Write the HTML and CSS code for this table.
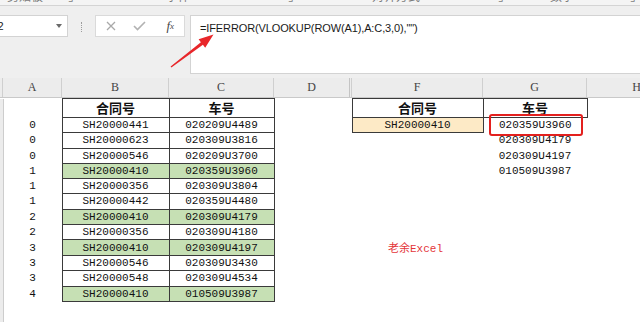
FILE: index.html
```html
<!DOCTYPE html>
<html>
<head>
<meta charset="utf-8">
<link rel="stylesheet" href="styles.css">
</head>
<body>
<div class="app">
  <div class="ribbon-edge">
    <span class="lb l1">剪贴板</span>
    <span class="lb l2">⌟</span>
    <span class="lb l3">字体</span>
    <span class="lb l4">⌟</span>
    <span class="lb l5">对齐方式</span>
    <span class="lb l6">⌟</span>
    <span class="lb l7">数字</span>
    <span class="lb l8">⌟</span>
  </div>
  <div class="toolbar">
    <div class="namebox"><span class="nb-text">G2</span><span class="dd"></span></div>
    <div class="grip"></div>
    <div class="fnbox">
      <span class="fnbtn"><svg width="10" height="10" viewBox="0 0 10 10"><path d="M1 1L9 9M9 1L1 9" stroke="#a9a9a9" stroke-width="1.3" fill="none"/></svg></span>
      <span class="fnbtn"><svg width="13" height="10" viewBox="0 0 13 10"><path d="M1 5L4.5 8.5L12 1" stroke="#b2b2b2" stroke-width="1.6" fill="none"/></svg></span>
      <span class="fnbtn fx">f<sub>x</sub></span>
    </div>
    <div class="formula">=IFERROR(VLOOKUP(ROW(A1),A:C,3,0),"")</div>
  </div>
  <div class="colheads">
    <div class="ch c-rh"></div>
    <div class="ch c-a">A</div>
    <div class="ch c-b">B</div>
    <div class="ch c-c">C</div>
    <div class="ch c-d">D</div>
    <div class="ch c-e"></div>
    <div class="ch c-f">F</div>
    <div class="ch c-g">G</div>
    <div class="ch c-h">H</div>
  </div>
  <table class="sheet">
    <colgroup>
      <col class="c-rh"><col class="c-a"><col class="c-b"><col class="c-c"><col class="c-d"><col class="c-e"><col class="c-f"><col class="c-g"><col class="c-h">
    </colgroup>
    <tr class="r1"><td class="rh"></td><td></td><td class="b hd">合同号</td><td class="b hd">车号</td><td></td><td></td><td class="b hd">合同号</td><td class="b hd">车号</td><td></td></tr>
    <tr><td class="rh"></td><td>0</td><td class="b">SH20000441</td><td class="b">020209U4489</td><td></td><td></td><td class="b y">SH20000410</td><td class="pin">020359U3960<div class="hl"></div></td><td></td></tr>
    <tr><td class="rh"></td><td>0</td><td class="b">SH20000623</td><td class="b">020309U3816</td><td></td><td></td><td></td><td>020309U4179</td><td></td></tr>
    <tr><td class="rh"></td><td>0</td><td class="b">SH20000546</td><td class="b">020209U3700</td><td></td><td></td><td></td><td>020309U4197</td><td></td></tr>
    <tr><td class="rh"></td><td>1</td><td class="b g">SH20000410</td><td class="b g">020359U3960</td><td></td><td></td><td></td><td>010509U3987</td><td></td></tr>
    <tr><td class="rh"></td><td>1</td><td class="b">SH20000356</td><td class="b">020309U3804</td><td></td><td></td><td></td><td></td><td></td></tr>
    <tr><td class="rh"></td><td>1</td><td class="b">SH20000442</td><td class="b">020359U4480</td><td></td><td></td><td></td><td></td><td></td></tr>
    <tr><td class="rh"></td><td>2</td><td class="b g">SH20000410</td><td class="b g">020309U4179</td><td></td><td></td><td></td><td></td><td></td></tr>
    <tr><td class="rh"></td><td>2</td><td class="b">SH20000356</td><td class="b">020309U4180</td><td></td><td></td><td></td><td></td><td></td></tr>
    <tr><td class="rh"></td><td>3</td><td class="b g">SH20000410</td><td class="b g">020309U4197</td><td></td><td></td><td class="note">老余Excel</td><td></td><td></td></tr>
    <tr><td class="rh"></td><td>3</td><td class="b">SH20000546</td><td class="b">020309U3430</td><td></td><td></td><td></td><td></td><td></td></tr>
    <tr><td class="rh"></td><td>3</td><td class="b">SH20000548</td><td class="b">020309U4534</td><td></td><td></td><td></td><td></td><td></td></tr>
    <tr><td class="rh"></td><td>4</td><td class="b g">SH20000410</td><td class="b g">010509U3987</td><td></td><td></td><td></td><td></td><td></td></tr>
    <tr class="rest"><td class="rh"></td><td></td><td></td><td></td><td></td><td></td><td></td><td></td><td></td></tr>
  </table>
  <svg class="arrow" width="640" height="322" viewBox="0 0 640 322">
    <polygon points="170.6,66.4 200.9,42.2 198.6,39.3 213.5,34.6 205.2,47.8 202.9,44.8 171.4,67.6" fill="#e8262a"/>
  </svg>
</div>
</body>
</html>
```
FILE: styles.css
```css
* { box-sizing: border-box; margin: 0; padding: 0; }
html, body { width: 640px; height: 322px; overflow: hidden; background: #fff; }
body { font-family: "Liberation Sans", "Noto Sans CJK SC", sans-serif; }
.app { position: relative; width: 640px; height: 322px; overflow: hidden; }

/* ribbon bottom edge */
.ribbon-edge { height: 6px; background: #f4f4f4; border-bottom: 1px solid #d4d4d4; display: flex; overflow: hidden; font-size: 12px; line-height: 12px; color: #7c7c7c; }
.lb { margin-top: -9px; white-space: nowrap; }
.l1 { margin-left: 7px; }
.l2 { margin-left: 25px; }
.l3 { margin-left: 92px; }
.l4 { margin-left: 98px; }
.l5 { margin-left: 78px; }
.l6 { margin-left: 78px; }
.l7 { margin-left: 46px; }
.l8 { margin-left: 56px; }

/* formula toolbar */
.toolbar { height: 72px; background: #efefef; display: flex; align-items: flex-start; padding-top: 9px; }
.namebox { width: 68px; height: 22px; background: #fff; border: 1px solid #d3d3d3; border-left: none; display: flex; align-items: center; justify-content: space-between; padding-right: 5px; overflow: hidden; font-size: 11px; color: #222; }
.nb-text { margin-left: -11px; }
.dd { width: 0; height: 0; border-left: 3px solid transparent; border-right: 3px solid transparent; border-top: 4px solid #6a6a6a; }
.grip { width: 0; height: 10px; margin: 7px 13px 0 13px; border-left: 1px dotted #9c9c9c; }
.fnbox { width: 90px; height: 22px; background: #fff; border: 1px solid #dadada; display: flex; align-items: center; }
.fnbtn { width: 30px; display: flex; justify-content: center; align-items: center; }
.fx { font-family: "Liberation Serif", serif; font-style: italic; font-size: 13px; color: #474747; line-height: 14px; padding-left: 2px; }
.fx sub { font-size: 9px; vertical-align: -2px; }
.formula { margin-left: 5px; flex: 1; height: 59px; background: #fff; border: 1px solid #d3d3d3; border-right: none; padding: 5px 0 0 9px; font-size: 11px; line-height: 14px; letter-spacing: -0.12px; color: #1a1a1a; white-space: nowrap; }

/* column headers */
.colheads { display: flex; height: 20px; background: #ececec; border-bottom: 1px solid #c9c9c9; }
.ch { flex: none; border-right: 1px solid #cfcfcf; text-align: center; font-family: "Liberation Serif", serif; font-size: 12px; line-height: 19px; color: #444; }
.c-rh { width: 3px; }
.c-a { width: 59px; }
.c-b { width: 107px; }
.c-c { width: 105px; }
.c-d { width: 76px; }
.c-e { width: 2px; }
.c-f { width: 131px; }
.c-g { width: 104px; }
.c-h { width: 100px; }
.ch.c-d { border-right-color: #c4c4c4; }

/* sheet */
.sheet { border-collapse: collapse; table-layout: fixed; width: 687px; }
.sheet td { height: 15.25px; padding: 0; padding-top: 1px; text-align: center; vertical-align: middle; font-family: "Liberation Mono", "Noto Sans CJK SC", monospace; font-size: 11px; line-height: 13px; color: #111; white-space: nowrap; }
.sheet tr.r1 td { height: 19px; padding-top: 0; }
.sheet tr.rest td { height: 30px; }
.sheet td.rh { background: #ececec; border-right: 1px solid #cdcdcd; }
.sheet td.b { border: 1px solid #3a3a3a; }
.sheet td.hd { font-family: "Noto Sans CJK SC", sans-serif; font-weight: bold; font-size: 13px; line-height: 16px; color: #111; }
.sheet td.g { background: #c6e0b4; }
.sheet td.y { background: #fdeac6; }
.sheet td.note { text-align: left; padding-left: 36px; padding-top: 3px; color: #e4353a; }
.sheet td.pin { position: relative; }
.hl { position: absolute; left: 5px; top: -4px; width: 94px; height: 22px; border: 2px solid #e3201e; border-radius: 3px; }

.arrow { position: absolute; left: 0; top: 0; pointer-events: none; }
```
